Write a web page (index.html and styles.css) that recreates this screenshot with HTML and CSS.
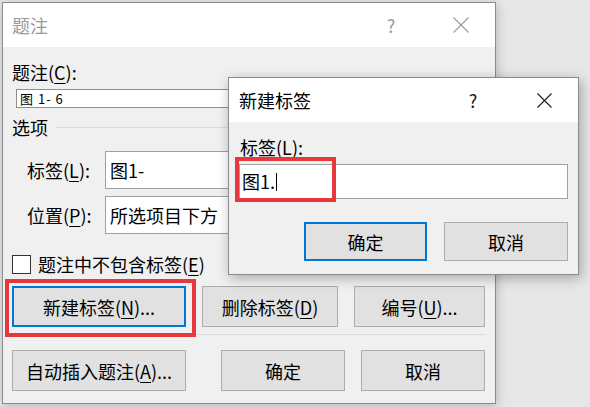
FILE: index.html
```html
<!DOCTYPE html>
<html>
<head>
<meta charset="utf-8">
<link rel="stylesheet" href="styles.css">
</head>
<body>
<div class="desk">
  <div class="dlg main">
    <div class="tbar">
      <span class="ttl">题注</span>
      <span class="help">?</span>
      <svg class="close" width="16" height="16" viewBox="0 0 16 16"><path d="M0.5 0.5L15.5 15.5M15.5 0.5L0.5 15.5" stroke="#9a9a9a" stroke-width="1.1" fill="none"/></svg>
    </div>
    <div class="body">
      <div class="lbl">题注(<u>C</u>):</div>
      <div class="capbox">图 1- 6</div>
      <div class="group"><span>选项</span><i class="rule"></i></div>
      <div class="field f1"><span class="flbl">标签(<u>L</u>):</span><div class="inp">图1-</div></div>
      <div class="field f2"><span class="flbl">位置(<u>P</u>):</span><div class="inp">所选项目下方</div></div>
      <div class="chk"><span class="box"></span>题注中不包含标签(<u>E</u>)</div>
      <div class="btnrow r1">
        <button class="btn focus mark b-new">新建标签(<u>N</u>)...</button>
        <button class="btn b-del">删除标签(<u>D</u>)</button>
        <button class="btn b-num">编号(<u>U</u>)...</button>
      </div>
      <div class="sep"></div>
      <div class="btnrow r2">
        <button class="btn b-auto">自动插入题注(<u>A</u>)...</button>
        <button class="btn b-ok">确定</button>
        <button class="btn b-cancel">取消</button>
      </div>
    </div>
  </div>

  <div class="dlg sub">
    <div class="tbar">
      <span class="ttl">新建标签</span>
      <span class="help">?</span>
      <svg class="close" width="15" height="15" viewBox="0 0 15 15"><path d="M0.5 0.5L14.5 14.5M14.5 0.5L0.5 14.5" stroke="#1a1a1a" stroke-width="1.1" fill="none"/></svg>
    </div>
    <div class="body">
      <div class="lbl">标签(<u>L</u>):</div>
      <div class="inp2 mark2">图1.<span class="caret"></span></div>
      <div class="btnrow2">
        <button class="btn focus s-ok">确定</button>
        <button class="btn s-cancel">取消</button>
      </div>
    </div>
  </div>
</div>
</body>
</html>
```

FILE: styles.css
```css
*, *::before, *::after { box-sizing: border-box; }
html, body { margin: 0; padding: 0; }
body {
  width: 590px;
  height: 407px;
  overflow: hidden;
  background: #e7e7e7;
  font-family: "Noto Sans CJK SC", "Noto Sans", sans-serif;
  font-size: 18px;
  color: #000;
}
.desk { position: relative; width: 590px; height: 407px; }
u { text-decoration: underline; text-underline-offset: 3px; text-decoration-thickness: 1px; }

.dlg {
  position: absolute;
  background: #f0f0f0;
  border: 1px solid #8c8c8c;
  display: flex;
  flex-direction: column;
}
.main {
  left: 2px; top: 2px; width: 494px; height: 402px;
  box-shadow: 1px 2px 10px rgba(0,0,0,0.22);
}
.sub {
  left: 228px; top: 77px; width: 351px; height: 198px;
  box-shadow: 2px 3px 12px rgba(0,0,0,0.3);
}

.tbar {
  height: 44px;
  background: #fff;
  display: flex;
  align-items: center;
  flex: none;
}
.main .tbar { padding-left: 9px; }
.main .ttl { color: #9a9a9a; flex: 1; line-height: 44px; }
.main .help { color: #9a9a9a; width: 20px; text-align: center; font-size: 18px; }
.main .close { margin-left: 52px; margin-right: 26px; }

.sub .tbar { padding-left: 10px; }
.sub .ttl { flex: 1; line-height: 44px; color: #000; }
.sub .help { width: 18px; text-align: center; color: #1a1a1a; }
.sub .close { margin-left: 55px; margin-right: 26px; }

.main .body { padding: 0 10px 0 9px; }
.lbl { margin-top: 13px; line-height: 24px; height: 24px; }
.capbox {
  margin-top: 5px; margin-left: 4px;
  height: 19px;
  background: #fff;
  border: 1px solid #8f8f8f;
  font-size: 13px;
  letter-spacing: 1px;
  line-height: 17px;
  padding-left: 3px;
}
.group {
  margin-top: 7px;
  height: 24px; line-height: 24px;
  display: flex; align-items: center;
}
.rule { flex: 1; height: 1px; background: #dadada; margin-left: 7px; }

.field { display: flex; height: 38px; align-items: center; }
.f1 { margin-top: 12px; }
.f2 { margin-top: 7px; }
.flbl { width: 93px; padding-left: 15px; flex: none; }
.inp {
  flex: 1; height: 38px;
  background: #fff;
  border: 1px solid #a0a0a0;
  line-height: 36px;
  padding-left: 4px;
}

.chk {
  margin-top: 18px;
  height: 24px; line-height: 24px;
  display: flex; align-items: center;
}
.box {
  width: 19px; height: 19px;
  background: #fff;
  border: 1px solid #333;
  margin-right: 7px;
  flex: none;
}

.btnrow { display: flex; }
.r1 { margin-top: 10px; }
.r2 { margin-top: 15px; }
.btn {
  font-family: inherit;
  font-size: 18px;
  color: #000;
  background: #e1e1e1;
  border: 1px solid #adadad;
  height: 41px;
  padding: 0;
  line-height: 24px;
  position: relative;
}
.btn.focus { border: 2px solid #0078d7; }
.b-new { width: 174px; }
.b-del { width: 136px; margin-left: 16px; }
.b-num { width: 131px; margin-left: 16px; }
.b-auto { width: 174px; }
.b-ok { width: 124px; margin-left: 35px; }
.b-cancel { width: 124px; margin-left: 16px; }

.mark::after {
  content: "";
  position: absolute;
  left: -9px; top: -9px;
  width: 191px; height: 58px;
  border: 4px solid #e5393d;
}

.sep { margin-top: 7px; height: 1px; background: #d9d9d9; }

.sub .body { padding: 0 10px; }
.sub .lbl { padding-left: 1px; }
.inp2 {
  margin-top: 5px;
  height: 35px;
  background: #fff;
  border: 1px solid #a0a0a0;
  line-height: 33px;
  padding-left: 2px;
  position: relative;
  display: flex;
  align-items: center;
}
.caret { display: inline-block; width: 1px; height: 18px; background: #000; margin-left: 1px; }
.mark2::after {
  content: "";
  position: absolute;
  left: -5px; top: -8px;
  width: 101px; height: 45px;
  border: 4px solid #e5393d;
}
.btnrow2 { display: flex; justify-content: flex-end; margin-top: 23px; }
.s-ok { width: 123px; height: 39px; }
.s-cancel { width: 124px; height: 39px; margin-left: 17px; }
```
